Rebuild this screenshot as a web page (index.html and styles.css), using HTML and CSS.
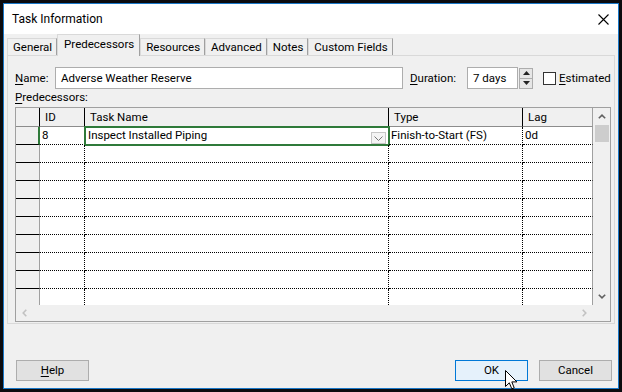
FILE: index.html
```html
<!DOCTYPE html>
<html lang="en">
  <head>
    <meta charset="utf-8" />
    <meta name="viewport" content="width=device-width, initial-scale=1" />
    <title>Task Information</title>

    <link rel="stylesheet" href="styles.css">
  </head>
  <body>
    <div class="dialog">
      <div class="titlebar">
        <span class="title">Task Information</span>
        <svg class="close" width="11" height="11" viewBox="0 0 11 11">
          <path d="M0.5 0.5L10.5 10.5M10.5 0.5L0.5 10.5" stroke="#000" stroke-width="1.1" fill="none" />
        </svg>
      </div>

      <div class="tabs">
        <div class="tab">General</div>
        <div class="tab active">Predecessors</div>
        <div class="tab">Resources</div>
        <div class="tab">Advanced</div>
        <div class="tab">Notes</div>
        <div class="tab">Custom Fields</div>
      </div>

      <div class="panel">
        <div class="name-row">
          <span class="lbl lbl-name"><u>N</u>ame:</span>
          <div class="field field-name">Adverse Weather Reserve</div>
          <span class="lbl lbl-dur"><u>D</u>uration:</span>
          <div class="field field-dur">7 days</div>
          <div class="spin">
            <div class="spin-btn">
              <svg width="7" height="4" viewBox="0 0 7 4"><path d="M0 4L3.5 0L7 4Z" fill="#222" /></svg>
            </div>
            <div class="spin-btn">
              <svg width="7" height="4" viewBox="0 0 7 4"><path d="M0 0L7 0L3.5 4Z" fill="#222" /></svg>
            </div>
          </div>
          <div class="check"></div>
          <span class="lbl lbl-est"><u>E</u>stimated</span>
        </div>

        <div class="pred-label"><u>P</u>redecessors:</div>

        <div class="grid">
          <div class="sheet">
            <div class="row head">
              <div class="cell rh"></div>
              <div class="cell">ID</div>
              <div class="cell">Task Name</div>
              <div class="cell">Type</div>
              <div class="cell last">Lag</div>
            </div>
            <div class="row">
              <div class="cell rh current"></div>
              <div class="cell">8</div>
              <div class="cell selected">
                <span>Inspect Installed Piping</span>
                <span class="drop">
                  <svg width="9" height="5" viewBox="0 0 9 5"><path d="M0.5 0.5L4.5 4.5L8.5 0.5" stroke="#777" fill="none" /></svg>
                </span>
              </div>
              <div class="cell">Finish-to-Start (FS)</div>
              <div class="cell last">0d</div>
            </div>
            <div class="row"><div class="cell rh"></div><div class="cell"></div><div class="cell"></div><div class="cell"></div><div class="cell last"></div></div>
            <div class="row"><div class="cell rh"></div><div class="cell"></div><div class="cell"></div><div class="cell"></div><div class="cell last"></div></div>
            <div class="row"><div class="cell rh"></div><div class="cell"></div><div class="cell"></div><div class="cell"></div><div class="cell last"></div></div>
            <div class="row"><div class="cell rh"></div><div class="cell"></div><div class="cell"></div><div class="cell"></div><div class="cell last"></div></div>
            <div class="row"><div class="cell rh"></div><div class="cell"></div><div class="cell"></div><div class="cell"></div><div class="cell last"></div></div>
            <div class="row"><div class="cell rh"></div><div class="cell"></div><div class="cell"></div><div class="cell"></div><div class="cell last"></div></div>
            <div class="row"><div class="cell rh"></div><div class="cell"></div><div class="cell"></div><div class="cell"></div><div class="cell last"></div></div>
            <div class="row"><div class="cell rh"></div><div class="cell"></div><div class="cell"></div><div class="cell"></div><div class="cell last"></div></div>
            <div class="row"><div class="cell rh"></div><div class="cell"></div><div class="cell"></div><div class="cell"></div><div class="cell last"></div></div>
          </div>

          <div class="vscroll">
            <div class="arrow">
              <svg width="8" height="5" viewBox="0 0 8 5"><path d="M0.8 4.3L4 1.2L7.2 4.3" stroke="#606060" stroke-width="1.6" fill="none" /></svg>
            </div>
            <div class="thumb"></div>
            <div class="arrow arrow-down">
              <svg width="8" height="5" viewBox="0 0 8 5"><path d="M0.8 0.7L4 3.8L7.2 0.7" stroke="#606060" stroke-width="1.6" fill="none" /></svg>
            </div>
          </div>

          <div class="hscroll">
            <svg width="5" height="8" viewBox="0 0 5 8"><path d="M4.3 0.8L1.2 4L4.3 7.2" stroke="#c2c2c2" stroke-width="1.6" fill="none" /></svg>
            <svg width="5" height="8" viewBox="0 0 5 8"><path d="M0.7 0.8L3.8 4L0.7 7.2" stroke="#c2c2c2" stroke-width="1.6" fill="none" /></svg>
          </div>
          <div class="corner"></div>
        </div>
      </div>

      <div class="buttons">
        <div class="btn"><u>H</u>elp</div>
        <div class="btn btn-ok">OK</div>
        <div class="btn btn-cancel">Cancel</div>
      </div>

      <!-- mouse pointer over OK -->
      <svg class="cursor" width="13" height="20" viewBox="0 0 13 20">
        <path d="M0.5 0.5L0.5 16.5L4.3 12.8L6.8 18.8L9.2 17.8L6.8 11.9L11.9 11.9Z" fill="#fff" stroke="#000" stroke-width="1" stroke-linejoin="round" />
      </svg>
    </div>
  </body>
</html>
```

FILE: styles.css
```css
* {
  box-sizing: border-box;
}

body {
  margin: 0;
  background-color: #0b0b0e;
  font-family: Roboto, "Liberation Sans", sans-serif;
  font-size: 11.5px;
  color: #000;
}

u {
  text-underline-offset: 2px;
}

.dialog {
  position: relative;
  width: 616px;
  height: 386px;
  margin: 3px 0 0 3px;
  border: 1px solid #1a78c8;
  background-color: #f0f0f0;
  display: flex;
  flex-direction: column;
}

.titlebar {
  flex: none;
  height: 30px;
  background-color: #fff;
  display: flex;
  align-items: center;
  justify-content: space-between;
  padding: 0 9px 0 8px;
  font-size: 12px;
}

.close {
  margin-top: 1px;
}

/* tab strip */
.tabs {
  flex: none;
  height: 21px;
  display: flex;
  align-items: flex-end;
  padding-left: 3px;
}

.tab {
  height: 17px;
  line-height: 16px;
  padding: 0 4px 0 5px;
  border: 1px solid #d9d9d9;
  border-right-color: #a0a0a0;
  border-bottom: 0;
  white-space: nowrap;
}

.tab.active {
  position: relative;
  z-index: 1;
  height: 22px;
  line-height: 18px;
  margin-bottom: -1px;
  background-color: #f0f0f0;
  padding: 0 5px 0 6px;
}

.panel {
  flex: none;
  height: 269px;
  margin: 0 3px;
  border: 1px solid #d9d9d9;
  padding: 11px 0 1px 7px;
}

.name-row {
  display: flex;
  align-items: center;
  height: 22px;
}

.lbl {
  flex: none;
  min-width: 0;
  white-space: nowrap;
}

.lbl-name {
  width: 40px;
}

.field {
  flex: none;
  height: 22px;
  line-height: 20px;
  border: 1px solid #adadad;
  background-color: #fff;
  padding-left: 5px;
  white-space: nowrap;
}

.field-name {
  width: 348px;
}

.lbl-dur {
  margin-left: 7px;
  width: 57px;
}

.field-dur {
  width: 51px;
}

.spin {
  flex: none;
  width: 14px;
  height: 21px;
  margin-left: 1px;
  display: flex;
  flex-direction: column;
}

.spin-btn {
  flex: 1;
  border: 1px solid #adadad;
  background-color: #e6e6e6;
  display: flex;
  align-items: center;
  justify-content: center;
}

.spin-btn + .spin-btn {
  border-top: 0;
}

.check {
  flex: none;
  width: 13px;
  height: 13px;
  margin-left: 10px;
  border: 1px solid #333;
  background-color: #fff;
}

.lbl-est {
  margin-left: 3px;
}

.pred-label {
  height: 18px;
  line-height: 17px;
}

/* predecessors sheet */
.grid {
  width: 596px;
  height: 215px;
  border: 1px solid #a0a0a0;
  display: grid;
  grid-template-columns: 577px 17px;
  grid-template-rows: 197px 16px;
}

.sheet {
  overflow: hidden;
  background-color: #fff;
}

.row {
  display: grid;
  grid-template-columns: 24px 45px 304px 134px 70px;
  height: 18px;
}

.cell {
  border-right: 1px dotted #000;
  border-bottom: 1px dotted #000;
  padding-left: 2px;
  line-height: 16px;
  white-space: nowrap;
  overflow: hidden;
}

.cell.last {
  border-right: 1px solid #a0a0a0;
}

.cell.rh {
  background-color: #f0f0f0;
  border-right: 1px solid #a0a0a0;
  border-bottom: 1px solid #000;
}

.cell.rh.current {
  border-right: 2px solid #2f7a3a;
}

.row.head {
  height: 19px;
  background-color: #f0f0f0;
}

.row.head .cell {
  border-right: 1px solid #000;
  border-bottom: 1px solid #8c8c8c;
  padding-left: 5px;
  line-height: 18px;
}

.row.head .cell.rh {
  border-right-color: #000;
}

.row.head .cell.last {
  border-right-color: #a0a0a0;
}

.cell.selected {
  display: flex;
  justify-content: space-between;
  outline: 2px solid #2f7a3a;
  outline-offset: -1px;
  padding-left: 3px;
}

.drop {
  width: 15px;
  height: 12px;
  margin: 5px 2px 0 0;
  border: 1px solid #c6c6c6;
  background-color: #f4f4f4;
  display: flex;
  align-items: center;
  justify-content: center;
}

.vscroll {
  display: flex;
  flex-direction: column;
  background-color: #f0f0f0;
}

.arrow {
  height: 17px;
  display: flex;
  align-items: center;
  justify-content: center;
}

.arrow-down {
  margin-top: auto;
}

.thumb {
  height: 17px;
  margin: 0 1px 0 2px;
  background-color: #cdcdcd;
}

.hscroll {
  display: flex;
  align-items: center;
  justify-content: space-between;
  padding: 0 6px 0 6px;
  background-color: #f0f0f0;
}

.corner {
  background-color: #f0f0f0;
}

/* bottom buttons */
.buttons {
  flex: none;
  display: flex;
  margin-top: 36px;
  padding: 0 6px 0 12px;
}

.btn {
  width: 73px;
  height: 21px;
  line-height: 19px;
  text-align: center;
  border: 1px solid #adadad;
  background-color: #e1e1e1;
}

.btn-ok {
  margin-left: auto;
  border-color: #0078d7;
  background-color: #e5f1fb;
}

.btn-cancel {
  margin-left: 11px;
}

.cursor {
  position: absolute;
  left: 501px;
  top: 366px;
}
```
